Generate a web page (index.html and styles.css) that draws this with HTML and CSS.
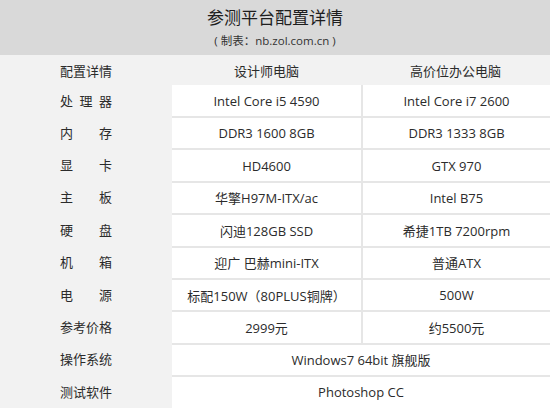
FILE: index.html
```html
<!DOCTYPE html>
<html lang="zh">
<head>
<meta charset="utf-8">
<link rel="stylesheet" href="styles.css">
</head>
<body>
<header class="head">
  <h1 class="title">参测平台配置详情</h1>
  <p class="sub">( 制表：nb.zol.com.cn )</p>
</header>
<div class="table">
  <div class="row hrow">
    <div class="label"><span class="lbl">配置详情</span></div>
    <div class="hcell">设计师电脑</div>
    <div class="hcell">高价位办公电脑</div>
  </div>
  <div class="row first">
    <div class="label"><span class="lbl sp3"><i>处</i><i>理</i><i>器</i></span></div>
    <div class="cell">Intel Core i5 4590</div>
    <div class="cell c3">Intel Core i7 2600</div>
  </div>
  <div class="row">
    <div class="label"><span class="lbl sp2"><i>内</i><i>存</i></span></div>
    <div class="cell">DDR3 1600 8GB</div>
    <div class="cell c3">DDR3 1333 8GB</div>
  </div>
  <div class="row">
    <div class="label"><span class="lbl sp2"><i>显</i><i>卡</i></span></div>
    <div class="cell">HD4600</div>
    <div class="cell c3">GTX 970</div>
  </div>
  <div class="row">
    <div class="label"><span class="lbl sp2"><i>主</i><i>板</i></span></div>
    <div class="cell">华擎H97M-ITX/ac</div>
    <div class="cell c3">Intel B75</div>
  </div>
  <div class="row">
    <div class="label"><span class="lbl sp2"><i>硬</i><i>盘</i></span></div>
    <div class="cell">闪迪128GB SSD</div>
    <div class="cell c3">希捷1TB 7200rpm</div>
  </div>
  <div class="row">
    <div class="label"><span class="lbl sp2"><i>机</i><i>箱</i></span></div>
    <div class="cell">迎广 巴赫mini-ITX</div>
    <div class="cell c3">普通ATX</div>
  </div>
  <div class="row">
    <div class="label"><span class="lbl sp2"><i>电</i><i>源</i></span></div>
    <div class="cell">标配150W（80PLUS铜牌）</div>
    <div class="cell c3">500W</div>
  </div>
  <div class="row">
    <div class="label"><span class="lbl">参考价格</span></div>
    <div class="cell">2999元</div>
    <div class="cell c3">约5500元</div>
  </div>
  <div class="row">
    <div class="label"><span class="lbl">操作系统</span></div>
    <div class="cell span">Windows7 64bit 旗舰版</div>
  </div>
  <div class="row">
    <div class="label"><span class="lbl">测试软件</span></div>
    <div class="cell span">Photoshop CC</div>
  </div>
</div>
</body>
</html>
```
FILE: styles.css
```css
html, body {
  margin: 0;
  padding: 0;
}
body {
  width: 550px;
  height: 408px;
  overflow: hidden;
  background: #f2f2f2;
  color: #2b2b2b;
  font-family: "Open Sans", "Noto Sans CJK SC", sans-serif;
  font-size: 13px;
}
.head {
  height: 55px;
  background: #d9d9d9;
  display: flex;
  flex-direction: column;
  align-items: center;
}
.title {
  margin: 6px 0 0;
  font-size: 17px;
  font-weight: normal;
  line-height: 22px;
  color: #1e1e1e;
  font-family: "Noto Sans CJK SC", sans-serif;
}
.sub {
  margin: 5px 0 0;
  font-size: 11.5px;
  line-height: 16px;
  color: #333;
}
.table {
  display: flex;
  flex-direction: column;
}
.row {
  display: grid;
  grid-template-columns: 172px 1fr 1fr;
  height: 32.4px;
}
.hrow {
  height: 30px;
}
.row.first {
  height: 31px;
}
.label {
  display: flex;
  align-items: center;
  justify-content: center;
  background: #f2f2f2;
}
.lbl {
  width: 52px;
  display: flex;
  justify-content: space-between;
  font-family: "Noto Sans CJK SC", sans-serif;
}
.lbl i {
  font-style: normal;
}
.hcell {
  display: flex;
  align-items: center;
  justify-content: center;
  font-family: "Noto Sans CJK SC", sans-serif;
}
.cell {
  display: flex;
  align-items: center;
  justify-content: center;
  background: #fff;
  border-top: 2px solid #e6e6e6;
}
.row.first .cell {
  border-top: 0;
}
.c3 {
  border-left: 2px solid #e6e6e6;
}
.span {
  grid-column: 2 / 4;
}
```
